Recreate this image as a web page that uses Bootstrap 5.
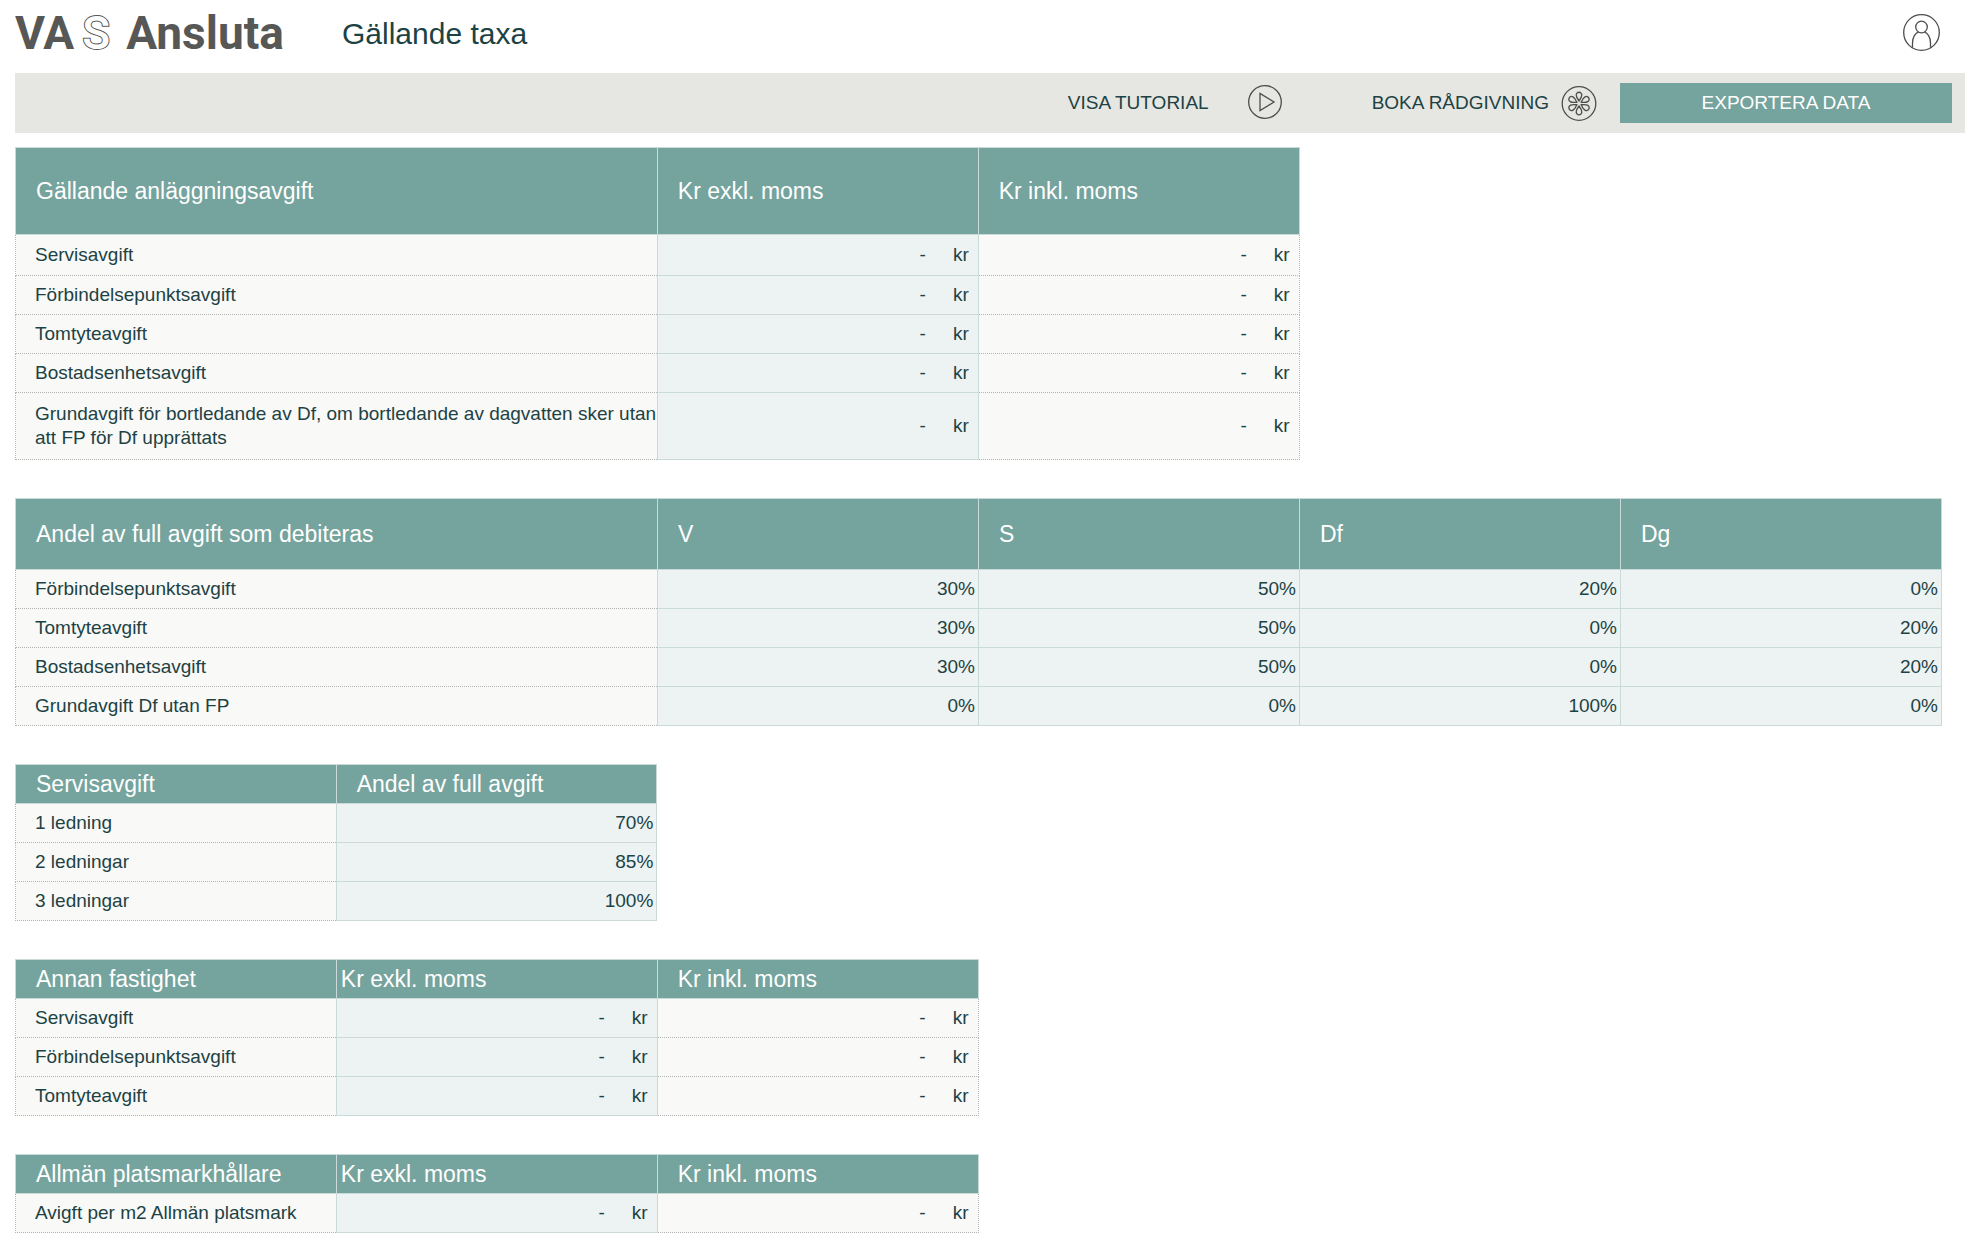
<!DOCTYPE html>
<html lang="sv">
<head>
<meta charset="utf-8">
<meta name="viewport" content="width=device-width, initial-scale=1">
<title>VAS Ansluta – Gällande taxa</title>
<link href="https://cdn.jsdelivr.net/npm/bootstrap@5.3.0/dist/css/bootstrap.min.css" rel="stylesheet">
<style>
  :root { --teal: #75a39d; --ink: #1d4243; --line: #c9dad8; --dots: #b4b4b2; }
  body { font-family: "Liberation Sans", Arial, sans-serif; font-size: 19px; line-height: 24px; color: var(--ink); background: #fff; }
  .page { padding-left: 15px; }
  .top-row { height: 73px; padding-right: 24px; padding-bottom: 7px; }
  .logo { font-family: Roboto, sans-serif; font-weight: 700; font-size: 46px; line-height: 56px; color: #575756; width: 327px; gap: 8px; }
  .logo:hover { color: #575756; }
  .logo-outline { font-weight: 500; color: #fff; -webkit-text-stroke: 2px #575756; paint-order: stroke fill; }
  .logo-name { margin-left: 8px; }
  .page-title { font-size: 30px; line-height: 36px; padding-top: 2px; }
  .icon { fill: none; stroke: #4d4d4c; stroke-width: 1.3; display: block; flex: none; }
  .tool-bar { background: #e6e7e2; height: 60px; padding-right: 13px; }
  .tool { font-size: 19px; line-height: 24px; color: var(--ink); border: 0; padding: 0; border-radius: 0; }
  .tool-tutorial { gap: 39px; margin-right: 90px; }
  .tool-advice { gap: 12px; margin-right: 23px; }
  .tool-export { width: 332px; height: 40px; background: var(--teal); color: #fff; }
  .tool-export:hover { background: #648f89; color: #fff; }
  .tables { padding: 14px 23px 28px 0; gap: 38px; }
  .fee { table-layout: fixed; color: var(--ink); margin: 0; border-collapse: collapse; }
  .fee > :not(caption) > * > * { padding: 0; box-shadow: none; border: 1px dotted var(--dots); color: inherit; vertical-align: middle; }
  .fee > thead > tr > th { background: var(--teal); color: #fff; font-size: 23px; line-height: 28px; font-weight: 400; border: 1px solid var(--line); padding-left: 20px; }
  .fee > thead > tr > th.tight { padding-left: 4px; }
  .fee > tbody > tr > th { background: #f9f9f8; font-weight: 400; padding-left: 19px; padding-bottom: 1px; }
  .fee > tbody > tr > td { background: #f9f9f8; text-align: right; padding-right: 9px; }
  .fee > tbody > tr > td.input { background: #edf3f3; border: 1px solid var(--line); }
  .fee > tbody > tr > td.pct { padding-right: 3px; }
  .fee tr { height: 39px; }
  .fee tr.head-lg { height: 87px; }
  .fee tr.head-md { height: 71px; }
  .fee tr.row-first { height: 41px; }
  .fee tr.row-lg { height: 67px; }
  .amount { display: inline-flex; gap: 27px; }
</style>
</head>
<body>
<div class="page">
  <header class="top-row d-flex align-items-center">
    <a href="#" class="logo d-flex text-decoration-none" aria-label="VAS Ansluta"><span>VA</span><span class="logo-outline">S</span><span class="logo-name">Ansluta</span></a>
    <h1 class="page-title fw-normal mb-0">Gällande taxa</h1>
    <button type="button" class="btn tool ms-auto" aria-label="Konto">
      <svg class="icon" width="38" height="38" viewBox="0 0 38 38"><circle cx="18.500" cy="18.500" r="17.800"/><circle cx="18.500" cy="13" r="5.800"/><path d="M9.500 33.500V29C9.500 23 12.500 19 15.500 18.200M27.500 33.500V29C27.500 23 24.500 19 21.500 18.200"/></svg>
    </button>
  </header>

  <nav class="tool-bar d-flex align-items-center justify-content-end">
    <button type="button" class="btn tool tool-tutorial d-flex align-items-center">VISA TUTORIAL
      <svg class="icon" width="34" height="36" viewBox="0 0 34 36"><circle cx="17" cy="17" r="16.300"/><path d="M12 8.500V25.500L26 17Z"/></svg>
    </button>
    <button type="button" class="btn tool tool-advice d-flex align-items-center">BOKA RÅDGIVNING
      <svg class="icon" width="36" height="36" viewBox="0 0 36 36"><circle cx="18" cy="18.500" r="16.800"/>
        <g transform="translate(0 .5)">
          <path id="petal" d="M18 15.500C16.500 13.500 15.200 11.500 15.200 9.500C15.200 5.800 20.800 5.800 20.800 9.500C20.800 11.500 19.500 13.500 18 15.500Z"/>
          <use href="#petal" transform="rotate(60 18 18)"/><use href="#petal" transform="rotate(120 18 18)"/><use href="#petal" transform="rotate(180 18 18)"/><use href="#petal" transform="rotate(240 18 18)"/><use href="#petal" transform="rotate(300 18 18)"/>
        </g>
      </svg>
    </button>
    <button type="button" class="btn tool tool-export">EXPORTERA DATA</button>
  </nav>

  <main class="tables d-flex flex-column">
    <div class="row g-0"><div class="col-8">
      <table class="table fee">
        <colgroup><col class="w-50"><col class="w-25"><col class="w-25"></colgroup>
        <thead><tr class="head-lg"><th scope="col">Gällande anläggningsavgift</th><th scope="col">Kr exkl. moms</th><th scope="col">Kr inkl. moms</th></tr></thead>
        <tbody>
          <tr class="row-first"><th scope="row">Servisavgift</th><td class="input"><span class="amount"><span>-</span><span>kr</span></span></td><td><span class="amount"><span>-</span><span>kr</span></span></td></tr>
          <tr><th scope="row">Förbindelsepunktsavgift</th><td class="input"><span class="amount"><span>-</span><span>kr</span></span></td><td><span class="amount"><span>-</span><span>kr</span></span></td></tr>
          <tr><th scope="row">Tomtyteavgift</th><td class="input"><span class="amount"><span>-</span><span>kr</span></span></td><td><span class="amount"><span>-</span><span>kr</span></span></td></tr>
          <tr><th scope="row">Bostadsenhetsavgift</th><td class="input"><span class="amount"><span>-</span><span>kr</span></span></td><td><span class="amount"><span>-</span><span>kr</span></span></td></tr>
          <tr class="row-lg"><th scope="row">Grundavgift för bortledande av Df, om bortledande av dagvatten sker utan att FP för Df upprättats</th><td class="input"><span class="amount"><span>-</span><span>kr</span></span></td><td><span class="amount"><span>-</span><span>kr</span></span></td></tr>
        </tbody>
      </table>
    </div></div>

    <div class="row g-0"><div class="col-12">
      <table class="table fee">
        <colgroup><col style="width:33.3333%"><col><col><col><col></colgroup>
        <thead><tr class="head-md"><th scope="col">Andel av full avgift som debiteras</th><th scope="col">V</th><th scope="col">S</th><th scope="col">Df</th><th scope="col">Dg</th></tr></thead>
        <tbody>
          <tr><th scope="row">Förbindelsepunktsavgift</th><td class="input pct">30%</td><td class="input pct">50%</td><td class="input pct">20%</td><td class="input pct">0%</td></tr>
          <tr><th scope="row">Tomtyteavgift</th><td class="input pct">30%</td><td class="input pct">50%</td><td class="input pct">0%</td><td class="input pct">20%</td></tr>
          <tr><th scope="row">Bostadsenhetsavgift</th><td class="input pct">30%</td><td class="input pct">50%</td><td class="input pct">0%</td><td class="input pct">20%</td></tr>
          <tr><th scope="row">Grundavgift Df utan FP</th><td class="input pct">0%</td><td class="input pct">0%</td><td class="input pct">100%</td><td class="input pct">0%</td></tr>
        </tbody>
      </table>
    </div></div>

    <div class="row g-0"><div class="col-4">
      <table class="table fee">
        <thead><tr><th scope="col">Servisavgift</th><th scope="col">Andel av full avgift</th></tr></thead>
        <tbody>
          <tr><th scope="row">1 ledning</th><td class="input pct">70%</td></tr>
          <tr><th scope="row">2 ledningar</th><td class="input pct">85%</td></tr>
          <tr><th scope="row">3 ledningar</th><td class="input pct">100%</td></tr>
        </tbody>
      </table>
    </div></div>

    <div class="row g-0"><div class="col-6">
      <table class="table fee">
        <thead><tr><th scope="col">Annan fastighet</th><th scope="col" class="tight">Kr exkl. moms</th><th scope="col">Kr inkl. moms</th></tr></thead>
        <tbody>
          <tr><th scope="row">Servisavgift</th><td class="input"><span class="amount"><span>-</span><span>kr</span></span></td><td><span class="amount"><span>-</span><span>kr</span></span></td></tr>
          <tr><th scope="row">Förbindelsepunktsavgift</th><td class="input"><span class="amount"><span>-</span><span>kr</span></span></td><td><span class="amount"><span>-</span><span>kr</span></span></td></tr>
          <tr><th scope="row">Tomtyteavgift</th><td class="input"><span class="amount"><span>-</span><span>kr</span></span></td><td><span class="amount"><span>-</span><span>kr</span></span></td></tr>
        </tbody>
      </table>
    </div></div>

    <div class="row g-0"><div class="col-6">
      <table class="table fee">
        <thead><tr><th scope="col">Allmän platsmarkhållare</th><th scope="col" class="tight">Kr exkl. moms</th><th scope="col">Kr inkl. moms</th></tr></thead>
        <tbody>
          <tr><th scope="row">Avigft per m2 Allmän platsmark</th><td class="input"><span class="amount"><span>-</span><span>kr</span></span></td><td><span class="amount"><span>-</span><span>kr</span></span></td></tr>
        </tbody>
      </table>
    </div></div>
  </main>
</div>
<script src="https://cdn.jsdelivr.net/npm/bootstrap@5.3.0/dist/js/bootstrap.bundle.min.js"></script>
</body>
</html>
